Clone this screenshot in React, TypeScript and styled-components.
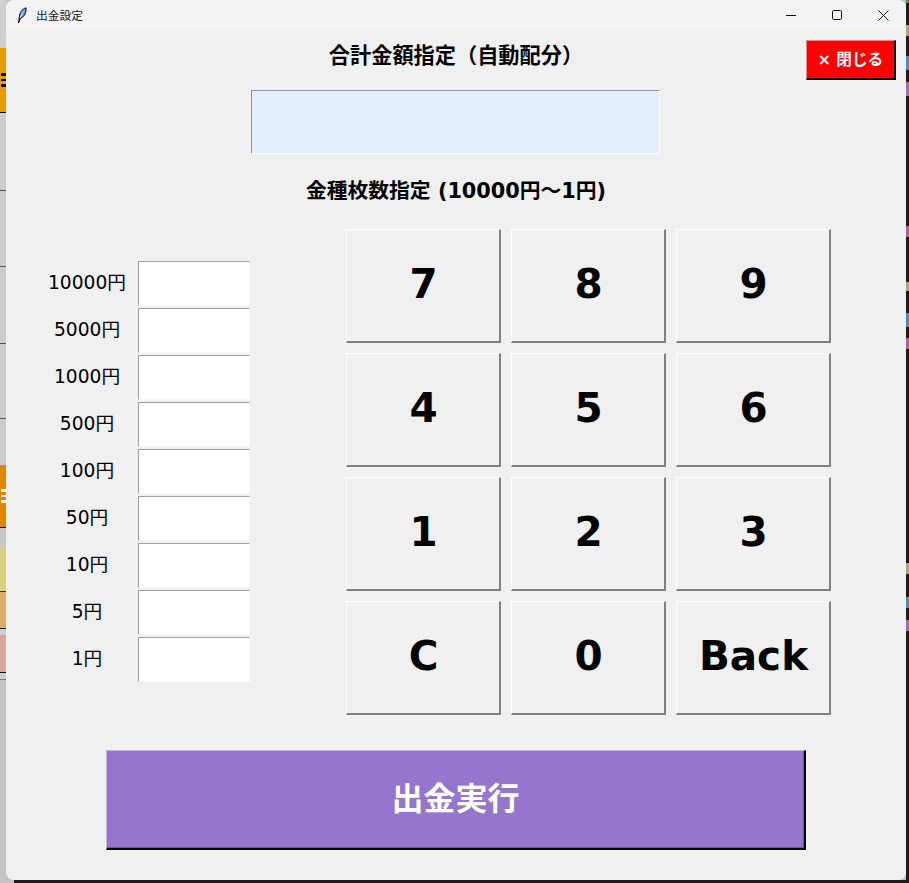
import React from 'react';
import styled, { createGlobalStyle } from 'styled-components';

const uiFont = `"DejaVu Sans", "Noto Sans CJK JP", sans-serif`;

const GlobalStyle = createGlobalStyle`
    html, body {
        margin: 0;
        padding: 0;
        background: #c4c4c4;
    }
    * {
        box-sizing: border-box;
    }
`;

const Desktop = styled.div`
    display: grid;
    grid-template-columns: 6px 900px 3px;
    grid-template-rows: 880px 3px;
    width: 909px;
    height: 883px;
    overflow: hidden;
    background: #c4c4c4;
`;

const Strip = styled.div`
    display: flex;
    flex-direction: column;
    overflow: hidden;
`;

const StripPiece = styled.div<{ $h: number; $bg: string }>`
    flex: 0 0 ${(p) => p.$h}px;
    display: flex;
    align-items: center;
    justify-content: flex-end;
    overflow: hidden;
    background: ${(p) => p.$bg};
`;

// the bit of a label of the window behind that shows past the edge
const StripMark = styled.span<{ $color: string }>`
    width: 5px;
    height: 14px;
    border-top: 3px solid ${(p) => p.$color};
    border-bottom: 3px solid ${(p) => p.$color};
    background: linear-gradient(to bottom, transparent 3px, ${(p) => p.$color} 3px 5px, transparent 5px);
`;

const BottomStrip = styled.div`
    grid-column: 1 / 4;
    background: linear-gradient(to right, #c4c4c4 0 14px, #1c1c1c 14px);
`;

const Window = styled.div`
    display: flex;
    flex-direction: column;
    background: #f0f0f0;
    border-radius: 8px;
    overflow: hidden;
    font-family: ${uiFont};
    color: #000;
`;

const TitleBar = styled.div`
    flex: 0 0 30px;
    display: flex;
    align-items: center;
    padding-left: 11px;
    background: #f3f3f3;
`;

const TitleText = styled.span`
    margin: -2px 0 0 9px;
    flex: 1;
    font: 11.75px "Noto Sans CJK JP", sans-serif;
    color: #1a1a1a;
`;

const CaptionButton = styled.div`
    width: 46px;
    height: 30px;
    display: flex;
    align-items: center;
    justify-content: center;
`;

const Header = styled.div`
    display: grid;
    grid-template-columns: 90px 1fr 90px;
    align-items: center;
    width: 890px;
    height: 50px;
    padding-top: 10px;
`;

const MainTitle = styled.h1`
    grid-column: 2;
    margin: -8px 0 0 10px;
    text-align: center;
    font: bold 21.2px/28px ${uiFont};
`;

const CloseButton = styled.button`
    grid-column: 3;
    height: 40px;
    padding: 0 0 4px;
    border-style: solid;
    border-width: 1px 2px 2px 1px;
    border-color: #ff8080 #000 #000 #ff8080;
    background: #ff0000;
    color: #fff;
    font: bold 15.6px ${uiFont};
`;

const TotalField = styled.input`
    align-self: center;
    display: block;
    width: 409px;
    height: 64px;
    margin: 10px 1px 0 0;
    padding: 0;
    border-style: solid;
    border-width: 1px;
    border-color: #8a959f #fff #fff #8a959f;
    border-radius: 0;
    background: #e3f0fb;
    outline: none;
`;

const SectionTitle = styled.h2`
    margin: 23px 0 0;
    height: 28px;
    text-align: center;
    font: bold 20.8px/28px ${uiFont};
`;

const MainRow = styled.div`
    display: flex;
    align-items: center;
    margin-top: 24px;
    padding-left: 36px;
`;

const DenominationList = styled.div`
    display: grid;
    grid-template-columns: 90px 112px;
    grid-auto-rows: 45px;
    column-gap: 6px;
    row-gap: 2px;
    align-items: center;
    margin-top: -2px;
`;

const DenominationLabel = styled.label`
    margin-top: -5px;
    text-align: center;
    font: 18.67px ${uiFont};
`;

const DenominationInput = styled.input`
    display: block;
    width: 112px;
    height: 45px;
    padding: 0;
    border-style: solid;
    border-width: 1px;
    border-color: #a0a0a0 #f8f8f8 #f8f8f8 #a0a0a0;
    border-radius: 0;
    background: #fff;
    outline: none;
`;

const Keypad = styled.div`
    display: grid;
    grid-template-columns: repeat(3, 155px);
    grid-auto-rows: 114px;
    gap: 10px;
    margin-left: 96px;
`;

const KeyButton = styled.button`
    padding: 0 0 4px 1px;
    border-style: solid;
    border-width: 1px 2px 2px 1px;
    border-color: #fff #808080 #808080 #fff;
    background: #f0f0f0;
    color: #000;
    font: bold 40.5px ${uiFont};
`;

const ExecuteButton = styled.button`
    align-self: center;
    width: 700px;
    height: 100px;
    margin-top: 35px;
    padding: 0 0 8px;
    border-style: solid;
    border-width: 1px 2px 2px 1px;
    border-color: #c6aef0 #000 #000 #c6aef0;
    box-shadow: inset -1px -1px 0 #6a5296;
    background: #9575cd;
    color: #fff;
    font: bold 32px ${uiFont};
`;

const leftStrip: { h: number; bg: string; mark?: string }[] = [
    { h: 48, bg: '#cfcfcf' },
    { h: 64, bg: '#e89c00', mark: '#000' },
    { h: 1, bg: '#111' },
    { h: 77, bg: '#cdcdcd' },
    { h: 1, bg: '#555' },
    { h: 75, bg: '#cdcdcd' },
    { h: 1, bg: '#555' },
    { h: 76, bg: '#cdcdcd' },
    { h: 1, bg: '#555' },
    { h: 74, bg: '#cdcdcd' },
    { h: 1, bg: '#555' },
    { h: 46, bg: '#cdcdcd' },
    { h: 62, bg: '#e08600', mark: '#fff' },
    { h: 1, bg: '#111' },
    { h: 19, bg: '#c8c8c8' },
    { h: 44, bg: '#d8d080' },
    { h: 1, bg: '#333' },
    { h: 36, bg: '#dcae68' },
    { h: 1, bg: '#111' },
    { h: 6, bg: '#cfcfcf' },
    { h: 37, bg: '#d8a89c' },
    { h: 1, bg: '#111' },
    { h: 6, bg: '#cfcfcf' },
    { h: 1, bg: '#777' },
];

const rightStrip: { h: number; bg: string }[] = [
    { h: 3, bg: '#5a8a4a' },
    { h: 22, bg: '#1c1c1c' },
    { h: 11, bg: '#a8a878' },
    { h: 20, bg: '#1c1c1c' },
    { h: 14, bg: '#4a8cc0' },
    { h: 12, bg: '#1c1c1c' },
    { h: 14, bg: '#9a70b8' },
    { h: 130, bg: '#1c1c1c' },
    { h: 11, bg: '#b060a8' },
    { h: 45, bg: '#1c1c1c' },
    { h: 9, bg: '#a8a878' },
    { h: 22, bg: '#1c1c1c' },
    { h: 14, bg: '#4a8cc0' },
    { h: 11, bg: '#1c1c1c' },
    { h: 11, bg: '#b060a8' },
    { h: 214, bg: '#1c1c1c' },
    { h: 11, bg: '#a8a878' },
    { h: 23, bg: '#1c1c1c' },
    { h: 11, bg: '#4a8cc0' },
    { h: 12, bg: '#1c1c1c' },
    { h: 11, bg: '#9a70b8' },
    { h: 260, bg: '#1c1c1c' },
];

const denominations = ['10000円', '5000円', '1000円', '500円', '100円', '50円', '10円', '5円', '1円'];
const keys = ['7', '8', '9', '4', '5', '6', '1', '2', '3', 'C', '0', 'Back'];

const FeatherIcon = () => (
    <svg width="10" height="17" viewBox="0 0 10 17">
        <path d="M1.5 16 L2.4 10 C2.4 6 5 2 9 .8 C9.6 4.5 8 9.5 3.4 11.5 Z" fill="#5c9be8" stroke="#0a0a0a" strokeWidth="1" />
        <path d="M3 11 L6.5 4.5" stroke="#d8e8ff" strokeWidth="1" fill="none" />
    </svg>
);

const MinimizeIcon = () => (
    <svg width="10" height="10" viewBox="0 0 10 10">
        <path d="M0 5.5 H10" stroke="#111" strokeWidth="1" fill="none" />
    </svg>
);

const MaximizeIcon = () => (
    <svg width="10" height="10" viewBox="0 0 10 10">
        <rect x=".5" y=".5" width="9" height="9" rx="1.2" stroke="#111" strokeWidth="1" fill="none" />
    </svg>
);

const CloseIcon = () => (
    <svg width="11" height="11" viewBox="0 0 11 11">
        <path d="M.5 .5 L10.5 10.5 M10.5 .5 L.5 10.5" stroke="#111" strokeWidth="1" fill="none" />
    </svg>
);

const App: React.FC = () => {
    return (
        <>
            <GlobalStyle />
            <Desktop>
                <Strip>
                    {leftStrip.map((piece, i) => (
                        <StripPiece key={i} $h={piece.h} $bg={piece.bg}>
                            {piece.mark && <StripMark $color={piece.mark} />}
                        </StripPiece>
                    ))}
                </Strip>
                <Window>
                    <TitleBar>
                        <FeatherIcon />
                        <TitleText>出金設定</TitleText>
                        <CaptionButton><MinimizeIcon /></CaptionButton>
                        <CaptionButton><MaximizeIcon /></CaptionButton>
                        <CaptionButton><CloseIcon /></CaptionButton>
                    </TitleBar>
                    <Header>
                        <MainTitle>合計金額指定（自動配分）</MainTitle>
                        <CloseButton>× 閉じる</CloseButton>
                    </Header>
                    <TotalField />
                    <SectionTitle>金種枚数指定 (10000円～1円)</SectionTitle>
                    <MainRow>
                        <DenominationList>
                            {denominations.map((label) => (
                                <React.Fragment key={label}>
                                    <DenominationLabel>{label}</DenominationLabel>
                                    <DenominationInput />
                                </React.Fragment>
                            ))}
                        </DenominationList>
                        <Keypad>
                            {keys.map((key) => (
                                <KeyButton key={key}>{key}</KeyButton>
                            ))}
                        </Keypad>
                    </MainRow>
                    <ExecuteButton>出金実行</ExecuteButton>
                </Window>
                <Strip>
                    {rightStrip.map((piece, i) => (
                        <StripPiece key={i} $h={piece.h} $bg={piece.bg} />
                    ))}
                </Strip>
                <BottomStrip />
            </Desktop>
        </>
    );
};

export default App;
